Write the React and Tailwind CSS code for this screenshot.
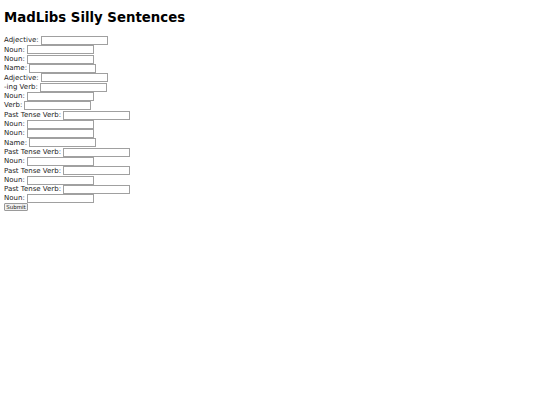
const fields = [
  "Adjective",
  "Noun",
  "Noun",
  "Name",
  "Adjective",
  "-ing Verb",
  "Noun",
  "Verb",
  "Past Tense Verb",
  "Noun",
  "Noun",
  "Name",
  "Past Tense Verb",
  "Noun",
  "Past Tense Verb",
  "Noun",
  "Past Tense Verb",
  "Noun",
];

export default function App() {
  return (
    <div className="min-h-[405px] bg-white p-[4px] text-black" style={{ fontFamily: '"DejaVu Sans", sans-serif' }}>
      <h1 className="mt-[5px] mb-[10px] text-[13.3px] leading-[17px] font-bold">MadLibs Silly Sentences</h1>
      <form className="flex flex-col text-[7px] text-[#222]">
        {fields.map((f, i) => (
          <div key={i} className="flex h-[9.3px] items-center">
            <label className="mr-[2px]">{f}:</label>
            <input type="text" className="h-[9px] w-[67px] border border-[#a0a0a0] bg-white" />
          </div>
        ))}
        <div className="mt-[-1px]">
          <button type="button" className="h-[8px] w-[24px] rounded-[1px] border border-[#9a9a9a] bg-[#efefef] text-[5.5px] leading-[6px]">
            Submit
          </button>
        </div>
      </form>
    </div>
  );
}
